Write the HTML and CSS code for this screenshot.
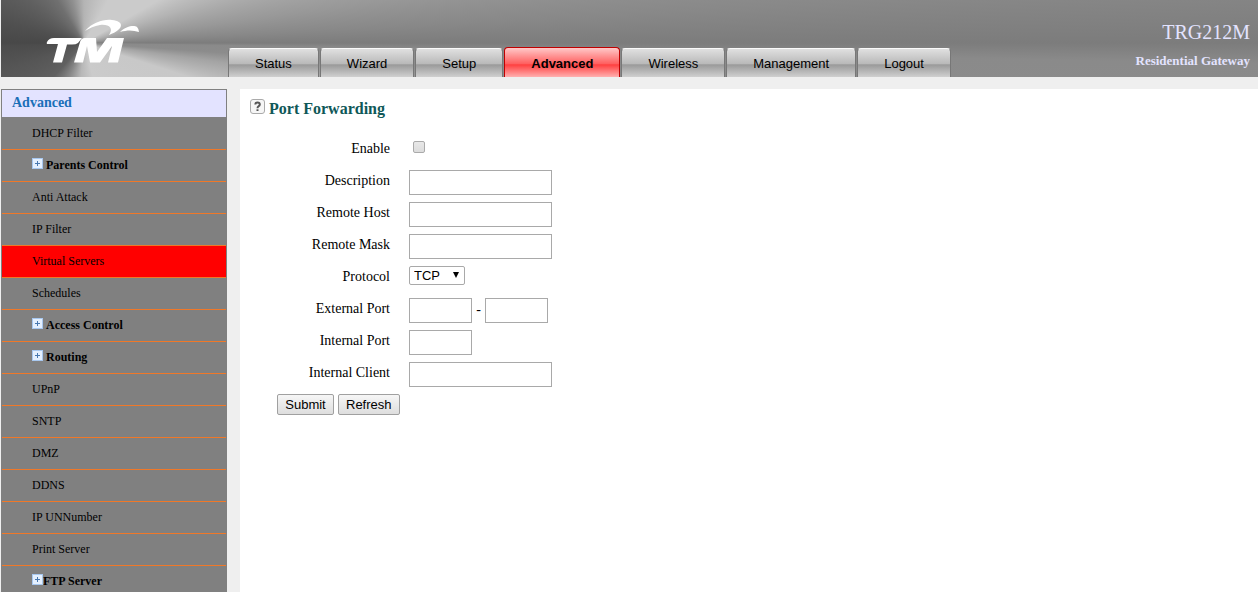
FILE: index.html
```html
<!DOCTYPE html>
<html lang="en">
<head>
<meta charset="utf-8">
<title>TRG212M Residential Gateway</title>
<link rel="stylesheet" href="styles.css">
</head>
<body>
<header class="banner">
  <svg class="logo" viewBox="0 0 98 50" role="img" aria-label="TM">
    <path d="M3 27 Q5 23 10 23 L38 23 L34 28 Q32 29.500 28 29.500 L23 29.500 L18 47.500 L9 47.500 L14 29 L4 29 Q2 29 3 27Z"/>
    <path d="M41 23 L52 23 L53 37 L63 23 L80 23 L74 47.500 L64 47.500 L68 31 L56 47.500 L46 47.500 L43 31 L39 47.500 L30 47.500 L36 27 Q37 23 41 23Z"/>
    <path d="M41 16 C49 7 60 4 68 5 C80 6 81 14 65 20 C70 13 65 9 56 10 C50 11 46 13 41 16Z"/>
    <path d="M76 17 C82 11 90 10 93 12 Q95 14 95 17 C89 15 83 15 76 17Z"/>
  </svg>
  <nav class="tabs" aria-label="Main">
    <a class="tab" href="#">Status</a>
    <a class="tab" href="#">Wizard</a>
    <a class="tab" href="#">Setup</a>
    <a class="tab tab-active" href="#">Advanced</a>
    <a class="tab" href="#">Wireless</a>
    <a class="tab" href="#">Management</a>
    <a class="tab" href="#">Logout</a>
  </nav>
  <div class="device">
    <div class="device-model">TRG212M</div>
    <div class="device-type">Residential Gateway</div>
  </div>
</header>
<div class="shell">
  <aside class="sidebar">
    <h2 class="sidebar-title">Advanced</h2>
    <ul class="menu">
      <li class="menu-item"><a href="#">DHCP Filter</a></li>
      <li class="menu-item menu-group"><span class="plus"></span><a href="#">Parents Control</a></li>
      <li class="menu-item"><a href="#">Anti Attack</a></li>
      <li class="menu-item"><a href="#">IP Filter</a></li>
      <li class="menu-item menu-current"><a href="#">Virtual Servers</a></li>
      <li class="menu-item"><a href="#">Schedules</a></li>
      <li class="menu-item menu-group"><span class="plus"></span><a href="#">Access Control</a></li>
      <li class="menu-item menu-group"><span class="plus"></span><a href="#">Routing</a></li>
      <li class="menu-item"><a href="#">UPnP</a></li>
      <li class="menu-item"><a href="#">SNTP</a></li>
      <li class="menu-item"><a href="#">DMZ</a></li>
      <li class="menu-item"><a href="#">DDNS</a></li>
      <li class="menu-item"><a href="#">IP UNNumber</a></li>
      <li class="menu-item"><a href="#">Print Server</a></li>
      <li class="menu-item menu-group menu-tight"><span class="plus"></span><a href="#">FTP Server</a></li>
    </ul>
  </aside>
  <main class="content">
    <div class="heading">
      <button class="help" type="button" aria-label="Help">
        <svg viewBox="0 0 13 13"><path d="M4.300 4.500 Q4.300 2.500 6.500 2.500 Q8.800 2.500 8.800 4.500 Q8.800 5.500 7.500 6.300 Q6.500 7 6.500 8.300"/><path d="M6.500 9.300 V11"/></svg>
      </button>
      <h1 class="title">Port Forwarding</h1>
    </div>
    <form class="form">
      <div class="row"><label class="label" for="enable">Enable</label><input class="check" type="checkbox" id="enable"></div>
      <div class="row"><label class="label" for="desc">Description</label><input class="field" type="text" id="desc"></div>
      <div class="row"><label class="label" for="host">Remote Host</label><input class="field" type="text" id="host"></div>
      <div class="row"><label class="label" for="mask">Remote Mask</label><input class="field" type="text" id="mask"></div>
      <div class="row"><label class="label" for="proto">Protocol</label>
        <span class="select-box"><select class="select" id="proto"><option>TCP</option><option>UDP</option></select></span></div>
      <div class="row"><label class="label" for="ext">External Port</label><input class="field field-port" type="text" id="ext"><span class="dash">-</span><input class="field field-port" type="text" aria-label="External port end"></div>
      <div class="row"><label class="label" for="int">Internal Port</label><input class="field field-port" type="text" id="int"></div>
      <div class="row"><label class="label" for="client">Internal Client</label><input class="field" type="text" id="client"></div>
      <div class="actions"><button class="button" type="button">Submit</button><button class="button" type="button">Refresh</button></div>
    </form>
  </main>
</div>
</body>
</html>
```
FILE: styles.css
```css
* { box-sizing: border-box; }
body {
  margin: 0;
  min-height: 100vh;
  display: flex;
  flex-direction: column;
  background: #efefef;
  color: #000;
  font-family: "Liberation Serif", "Times New Roman", serif;
}
a { color: inherit; text-decoration: none; }

.banner {
  display: flex;
  align-items: flex-end;
  margin-left: 1px;
  min-height: 77px;
  background: conic-gradient(from 0deg at 83px 43px,
    #b4b4b4 0deg, #cbcbcb 30deg, #cbcbcb 60deg, #b4b4b4 71deg, #989898 82deg, #888 87deg, #7c7c7c 90deg,
    #8a8a8a 91deg, #8c8c8c 94deg, #a4a4a4 98deg, #c8c8c8 108deg, #cbcbcb 165deg, #b8b8b8 185deg,
    #858585 205deg, #606060 222deg, #565656 250deg, #4c4c4c 268deg, #484848 270deg, #505050 285deg,
    #606060 308deg, #707070 328deg, #909090 345deg, #b4b4b4 360deg);
}
.logo {
  width: 98px;
  height: 50px;
  margin: 0 86px 12px 43px;
  fill: #fff;
}
.tabs { display: flex; align-items: flex-end; gap: 1px; }
.tab {
  height: 29px;
  padding: 0 26px;
  border: 1px solid #777;
  border-top-color: #fafafa;
  border-bottom: 0;
  border-radius: 4px 4px 0 0;
  background: linear-gradient(#e0e0e0, #b8b8b8 54%, #999 56%, #d0d0d0);
  font: 13px/29px "Liberation Sans", Arial, sans-serif;
}
.tab-active {
  height: 30px;
  border-color: #c00000;
  background: linear-gradient(#ffc8c8, #ff6060 54%, #ff4040 58%, #ffb0b0);
  font-weight: bold;
  line-height: 31px;
}
.device {
  margin: 0 8px 8px auto;
  color: #e3e3ff;
  text-align: right;
}
.device-model { font-size: 20px; line-height: 24px; margin-bottom: 8px; }
.device-type { font-size: 13px; line-height: 17px; font-weight: bold; }

.shell { display: flex; flex: 1; margin-top: 12px; }
.sidebar {
  flex: 0 0 226px;
  margin: 0 13px 0 1px;
  border: 1px solid #808080;
  background: #808080;
}
.sidebar-title {
  margin: 0;
  padding: 0 10px 2px;
  background: #e3e3ff;
  color: #1a6fb8;
  font-size: 14px;
  line-height: 25px;
}
.menu { margin: 0; padding: 1px 0 0; list-style: none; }
.menu-item {
  display: flex;
  align-items: center;
  height: 32px;
  padding-left: 30px;
  border-bottom: 1px solid #f07828;
  font-size: 12px;
}
.menu-current { background: #f00; }
.menu-group { gap: 3px; font-weight: bold; }
.menu-tight { gap: 0; }
.plus {
  width: 11px;
  height: 11px;
  margin-bottom: 4px;
  border: 1px solid #a8c8f0;
  background:
    linear-gradient(#4878b0, #4878b0) center / 5px 1px no-repeat,
    linear-gradient(#4878b0, #4878b0) center / 1px 5px no-repeat,
    #e4f0ff;
}

.content { flex: 1; padding: 10px; background: #fff; }
.heading { display: flex; gap: 4px; }
.help {
  width: 15px;
  height: 15px;
  padding: 0;
  border: 1px solid #aaa;
  border-radius: 3px;
  background: #f6f6f6;
}
.help svg { display: block; width: 13px; height: 13px; fill: none; stroke: #555; stroke-width: 2; }
.title { margin: 0; color: #0f5858; font-size: 16px; line-height: 20px; }

.form { padding-top: 15px; font-size: 14px; }
.row { display: flex; align-items: center; height: 32px; }
.label { width: 140px; margin-right: 19px; padding-bottom: 3px; text-align: right; }
.field {
  width: 143px;
  height: 25px;
  padding: 2px 4px;
  border: 1px solid #a9a9a9;
  background: #fff;
  font: 13px "Liberation Sans", Arial, sans-serif;
}
.field-port { width: 63px; }
.dash { width: 13px; text-align: center; }
.check {
  appearance: none;
  width: 12px;
  height: 12px;
  margin: 0 0 6px 4px;
  border: 1px solid #aaa;
  border-radius: 2px;
  background: linear-gradient(#e8e8e8, #dcdcdc);
}
.select-box { position: relative; margin-bottom: 6px; display: flex; }
.select-box::after {
  content: "";
  position: absolute;
  right: 6px;
  top: 6px;
  border: 3px solid transparent;
  border-top: 6px solid #000;
  border-bottom: 0;
  pointer-events: none;
}
.select {
  appearance: none;
  width: 56px;
  height: 19px;
  padding: 0 4px;
  border: 1px solid #a9a9a9;
  border-radius: 2px;
  background: #fff;
  color: #000;
  font: 13px "Liberation Sans", Arial, sans-serif;
}
.actions { display: flex; gap: 4px; padding: 4px 0 0 27px; }
.button {
  min-width: 57px;
  height: 21px;
  padding: 0 7px;
  border: 1px solid #a0a0a0;
  border-radius: 2px;
  background: linear-gradient(#f6f6f6, #dedede);
  color: #000;
  font: 13px "Liberation Sans", Arial, sans-serif;
}
```
